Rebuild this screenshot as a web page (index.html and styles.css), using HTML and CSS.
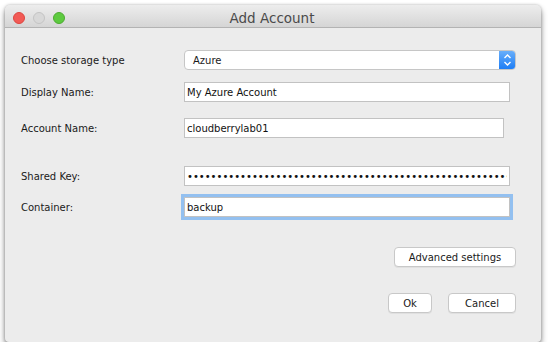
FILE: index.html
```html
<!DOCTYPE html>
<html lang="en">

<head>
    <meta charset="UTF-8">
    <meta name="viewport" content="width=device-width, initial-scale=1.0">
    <title>Add Account</title>
    <link rel="stylesheet" href="styles.css">
</head>

<body>
    <div class="window">
        <div class="titlebar">
            <div class="lights">
                <span class="light red"></span>
                <span class="light grey"></span>
                <span class="light green"></span>
            </div>
            <div class="title">Add Account</div>
        </div>

        <div class="content">
            <div class="row row-type">
                <label>Choose storage type</label>
                <div class="select">
                    <span class="select-value">Azure</span>
                    <span class="stepper">
                        <svg width="9" height="14" viewBox="0 0 9 14">
                            <path d="M1.5 5 L4.5 2 L7.5 5" fill="none" stroke="#fff" stroke-width="1.4" />
                            <path d="M1.5 9 L4.5 12 L7.5 9" fill="none" stroke="#fff" stroke-width="1.4" />
                        </svg>
                    </span>
                </div>
            </div>
            <div class="row row-display">
                <label>Display Name:</label>
                <input type="text" class="input-text wide" value="My Azure Account" readonly />
            </div>
            <div class="row row-account">
                <label>Account Name:</label>
                <input type="text" class="input-text narrow" value="cloudberrylab01" readonly />
            </div>
            <div class="row row-key">
                <label>Shared Key:</label>
                <input type="password" class="input-text wide key"
                    value="aaaaaaaaaaaaaaaaaaaaaaaaaaaaaaaaaaaaaaaaaaaaaaaaaaaaaaaaaaaaaaaaaaaaaaaaaaaaaaaaaaaaaaaaaaaaaaaaaaaaaaaaaa"
                    readonly />
            </div>
            <div class="row row-container">
                <label>Container:</label>
                <input type="text" class="input-text wide focused" value="backup" readonly />
            </div>

            <div class="actions advanced">
                <button class="btn btn-advanced">Advanced settings</button>
            </div>
            <div class="actions footer">
                <button class="btn btn-ok">Ok</button>
                <button class="btn btn-cancel">Cancel</button>
            </div>
        </div>
    </div>
</body>

</html>
```

FILE: styles.css
```css
body {
    padding: 0px;
    margin: 0px;
    background-color: #ffffff;
    font-family: "DejaVu Sans", sans-serif;
    font-size: 10px;
    color: #1a1a1a;
}

.window {
    margin: 5px 0 0 5px;
    width: 536px;
    height: 337px;
    background-color: #ececec;
    border-radius: 5px 5px 4px 4px;
    box-shadow: 0 4px 6px rgba(0, 0, 0, 0.45), 0 0 3px rgba(0, 0, 0, 0.25);
    display: flex;
    flex-direction: column;
    overflow: hidden;
}

.titlebar {
    height: 22px;
    background: linear-gradient(#ededed, #d5d5d5);
    border-bottom: 1px solid #b3b3b3;
    display: flex;
    align-items: center;
}

.lights {
    display: flex;
    gap: 8px;
    padding-left: 8px;
    padding-top: 3px;
}

.light {
    width: 12px;
    height: 12px;
    border-radius: 50%;
    box-sizing: border-box;
}

.red {
    background-color: #f25a55;
    border: 1px solid #dc4640;
}

.grey {
    background-color: #d8d8d8;
    border: 1px solid #c4c4c4;
}

.green {
    background-color: #5dca3f;
    border: 1px solid #4daa31;
}

.title {
    flex: 1;
    text-align: center;
    font-size: 13.5px;
    color: #4a4a4a;
    padding-top: 3px;
    padding-right: 62px;
}

.content {
    flex: 1;
    display: flex;
    flex-direction: column;
    padding: 0 25px 0 16px;
}

.row {
    display: flex;
    align-items: center;
}

.row label {
    width: 163px;
    flex-shrink: 0;
}

.row-type {
    margin-top: 22px;
}

.row-display {
    margin-top: 12px;
}

.row-account {
    margin-top: 16px;
}

.row-key {
    margin-top: 28px;
}

.row-container {
    margin-top: 11px;
}

.select {
    width: 338px;
    height: 20px;
    box-sizing: border-box;
    background-color: #ffffff;
    border: 1px solid #c6c6c6;
    border-radius: 4px;
    display: flex;
    align-items: center;
    justify-content: space-between;
    overflow: hidden;
}

.select-value {
    padding-left: 8px;
}

.stepper {
    width: 17px;
    height: 20px;
    margin-right: -1px;
    background: linear-gradient(#6cb1fb, #1a7bf5);
    border-radius: 0 4px 4px 0;
    display: flex;
    align-items: center;
    justify-content: center;
}

input[type=text],
input[type=password] {
    height: 20px;
    box-sizing: border-box;
    border: 1px solid #c2c2c2;
    border-radius: 0;
    background-color: #ffffff;
    padding: 0 2px;
    font-family: "DejaVu Sans", sans-serif;
    font-size: 10px;
    color: #111111;
    outline: none;
}

.wide {
    width: 326px;
}

.narrow {
    width: 320px;
}

.key {
    font-size: 4.6px;
    letter-spacing: 0px;
    color: #000000;
}

.focused {
    border: 1px solid #7aa8e0;
    box-shadow: 0 0 0 3px #93c0f0;
    border-radius: 2px;
}

.actions {
    display: flex;
    justify-content: flex-end;
}

.advanced {
    margin-top: 30px;
}

.footer {
    margin-top: 26px;
    gap: 16px;
}

.btn {
    height: 20px;
    background-color: #ffffff;
    border: 1px solid #c8c8c8;
    border-radius: 4px;
    font-family: "DejaVu Sans", sans-serif;
    font-size: 10px;
    color: #1a1a1a;
    padding: 0;
    box-shadow: 0 1px 0 rgba(0, 0, 0, 0.05);
}

.btn-advanced {
    width: 122px;
}

.btn-ok {
    width: 44px;
}

.btn-cancel {
    width: 68px;
}
```
